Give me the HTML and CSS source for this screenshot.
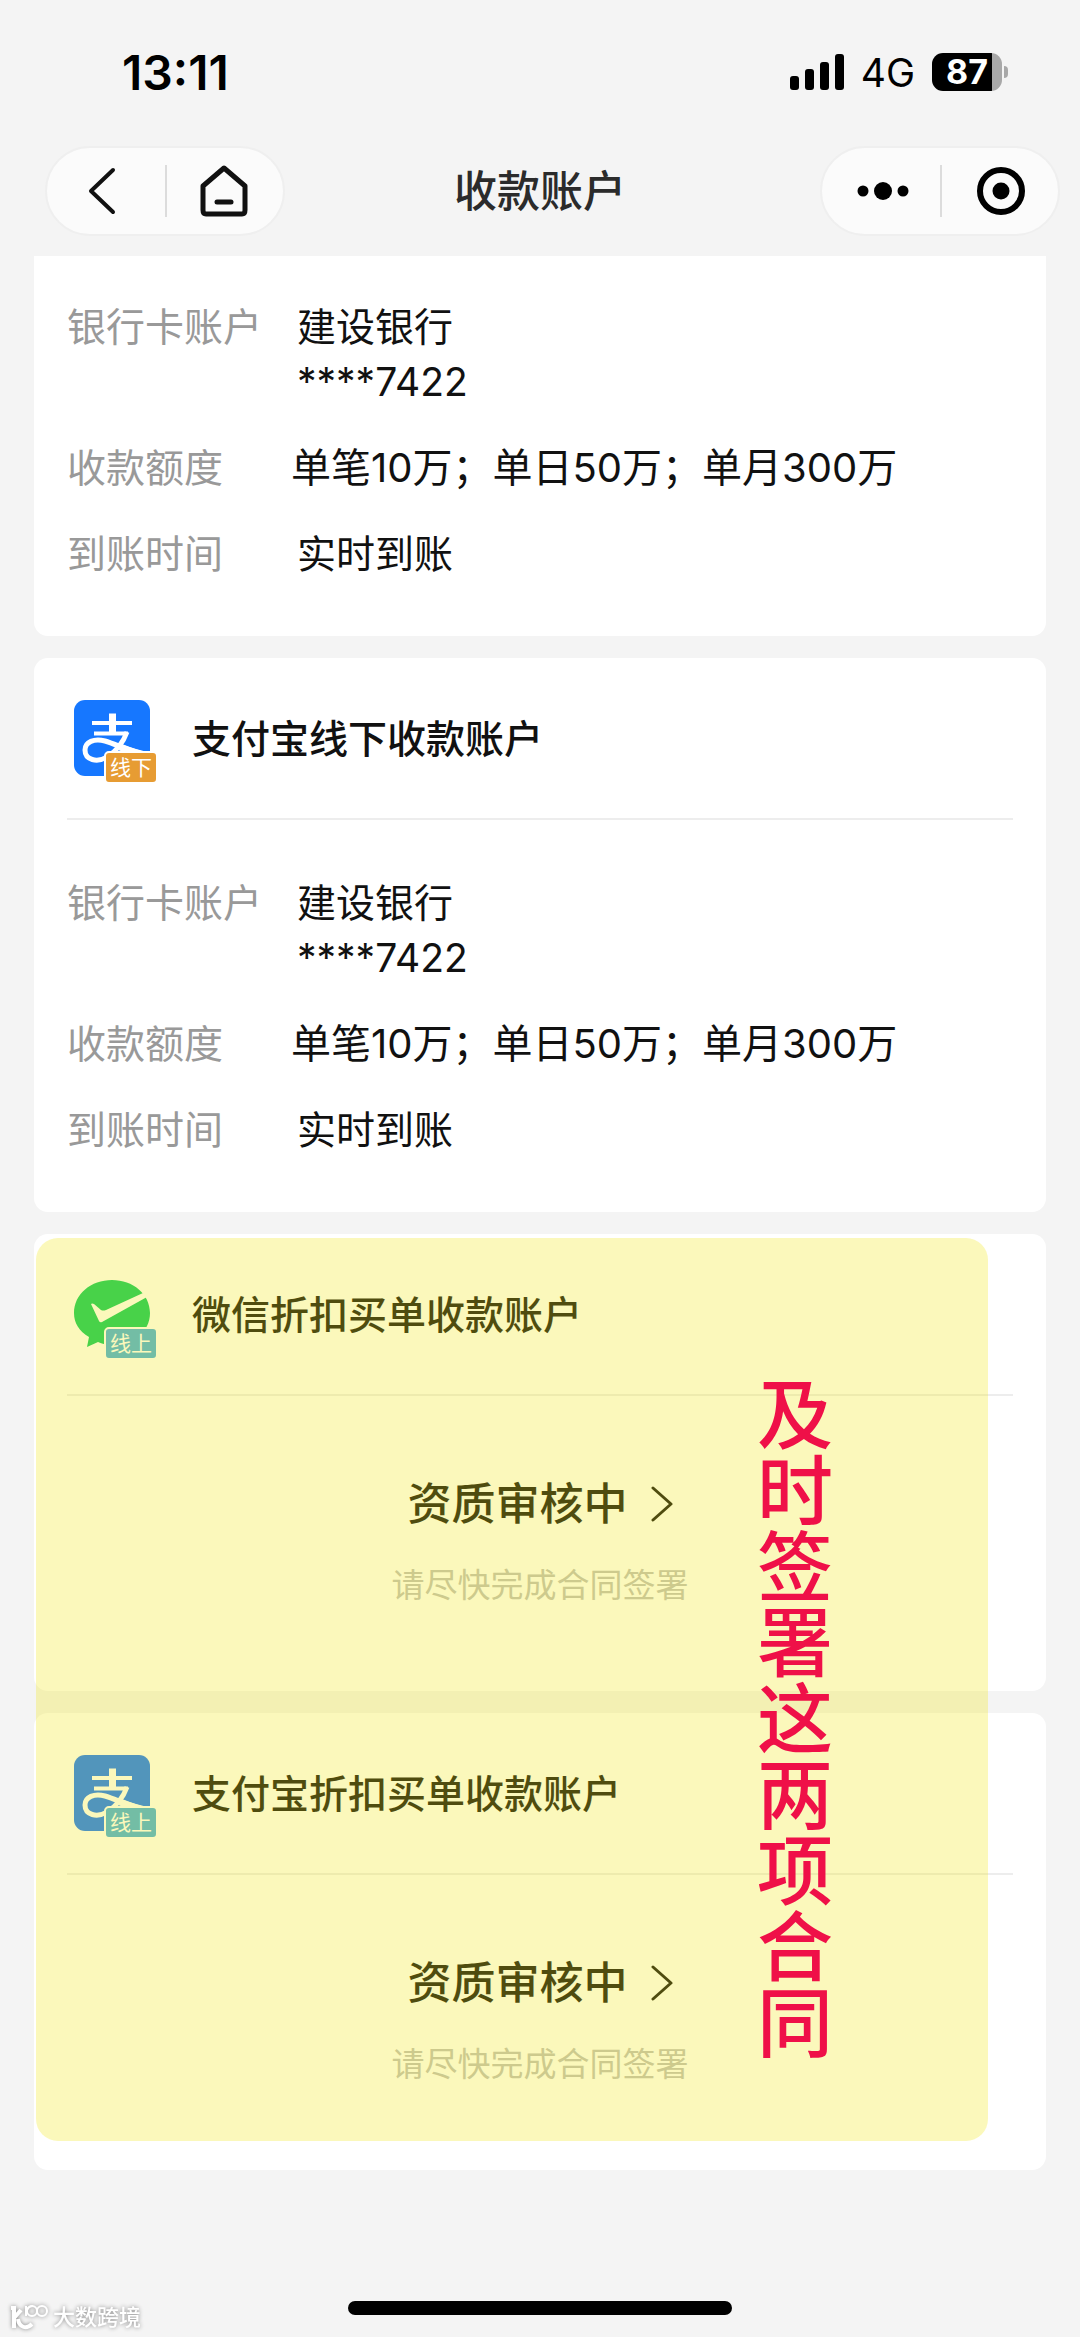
FILE: index.html
```html
<!DOCTYPE html>
<html lang="zh-CN">
<head>
<meta charset="utf-8">
<meta name="viewport" content="width=device-width, initial-scale=1">
<title>收款账户</title>
<link rel="stylesheet" href="styles.css">
</head>
<body>
<svg class="defs" aria-hidden="true">
  <symbol id="alipay" viewBox="0 0 76 76">
    <rect width="76" height="76" rx="11" fill="#1677ff"/>
    <g fill="none" stroke="#fff">
      <path d="M18 23H58M20 33.500H54" stroke-width="4"/>
      <path d="M38.500 13.500V34" stroke-width="7"/>
      <path d="M53 32C49 43 41 52 33 57C23 63 11 60 11 50C11 42 20 38 31 41C44 45 58 52 78 56" stroke-width="5"/>
      <path d="M46 47C56 51 64 54 76 56" stroke-width="7"/>
    </g>
  </symbol>
  <symbol id="wechat" viewBox="0 0 76 76">
    <path d="M38 4C59 4 76 18 76 37S59 69 38 69C33 69 28 68 24 66L13 71L15 61C5 55 0 47 0 37C0 18 17 4 38 4Z" fill="#08cb62"/>
    <path d="M17 28Q18 27 20 28L27 34Q29 35 32 34L69 17L73 21L28 46Q26 47 25 45Z" fill="#fff"/>
  </symbol>
  <symbol id="chevron" viewBox="0 0 22 36">
    <path d="M2 2L20 18L2 34" fill="none" stroke="#111" stroke-width="3" stroke-linejoin="round" stroke-linecap="round"/>
  </symbol>
</svg>

<header class="top">
  <div class="status-bar">
    <time class="clock">13:11</time>
    <div class="indicators">
      <svg class="signal" viewBox="0 0 54 36" aria-hidden="true">
        <rect x="0" y="22" width="9" height="14" rx="3"/>
        <rect x="15" y="15" width="9" height="21" rx="3"/>
        <rect x="30" y="8" width="9" height="28" rx="3"/>
        <rect x="45" y="0" width="9" height="36" rx="3"/>
      </svg>
      <span class="network">4G</span>
      <span class="battery"><span class="battery-level">87</span><i class="battery-tip"></i></span>
    </div>
  </div>
  <nav class="nav">
    <div class="capsule capsule-start">
      <button class="capsule-button" type="button" aria-label="返回">
        <svg width="28" height="50" viewBox="0 0 28 50"><path d="M25 4L3 25L25 46" fill="none" stroke="#111" stroke-width="4" stroke-linejoin="round" stroke-linecap="round"/></svg>
      </button>
      <button class="capsule-button" type="button" aria-label="首页">
        <svg width="48" height="52" viewBox="0 0 48 52"><path d="M3 21L24 3L45 21V45Q45 49 42 49H6Q3 49 3 45Z" fill="none" stroke="#111" stroke-width="5" stroke-linejoin="round"/><path d="M17 37H31" stroke="#111" stroke-width="5" stroke-linecap="round"/></svg>
      </button>
    </div>
    <h1 class="page-title">收款账户</h1>
    <div class="capsule capsule-end">
      <button class="capsule-button" type="button" aria-label="更多">
        <svg width="52" height="20" viewBox="0 0 52 20"><circle cx="6" cy="10" r="5.500"/><circle cx="26" cy="10" r="9"/><circle cx="46" cy="10" r="5.500"/></svg>
      </button>
      <button class="capsule-button" type="button" aria-label="关闭">
        <svg width="50" height="50" viewBox="0 0 50 50"><circle cx="25" cy="25" r="21" fill="none" stroke="#000" stroke-width="6"/><circle cx="25" cy="25" r="8.500"/></svg>
      </button>
    </div>
  </nav>
</header>

<main class="content">
  <section class="card card-scrolled">
    <dl class="details">
      <div class="row"><dt>银行卡账户</dt><dd>建设银行<br>****7422</dd></div>
      <div class="row row-limit"><dt>收款额度</dt><dd>单笔10万；单日50万；单月300万</dd></div>
      <div class="row"><dt>到账时间</dt><dd>实时到账</dd></div>
    </dl>
  </section>

  <section class="card">
    <div class="card-head">
      <div class="logo"><svg class="logo-mark" aria-hidden="true"><use href="#alipay"/></svg><span class="tag tag-offline">线下</span></div>
      <h2 class="card-title">支付宝线下收款账户</h2>
    </div>
    <dl class="details">
      <div class="row"><dt>银行卡账户</dt><dd>建设银行<br>****7422</dd></div>
      <div class="row row-limit"><dt>收款额度</dt><dd>单笔10万；单日50万；单月300万</dd></div>
      <div class="row"><dt>到账时间</dt><dd>实时到账</dd></div>
    </dl>
  </section>

  <div class="pending">
    <section class="card">
      <div class="card-head">
        <div class="logo"><svg class="logo-mark" aria-hidden="true"><use href="#wechat"/></svg><span class="tag tag-online">线上</span></div>
        <h2 class="card-title">微信折扣买单收款账户</h2>
      </div>
      <div class="review">
        <button class="review-button" type="button">资质审核中<svg class="review-arrow" aria-hidden="true"><use href="#chevron"/></svg></button>
        <p class="review-hint">请尽快完成合同签署</p>
      </div>
    </section>
    <section class="card">
      <div class="card-head">
        <div class="logo"><svg class="logo-mark" aria-hidden="true"><use href="#alipay"/></svg><span class="tag tag-online">线上</span></div>
        <h2 class="card-title">支付宝折扣买单收款账户</h2>
      </div>
      <div class="review">
        <button class="review-button" type="button">资质审核中<svg class="review-arrow" aria-hidden="true"><use href="#chevron"/></svg></button>
        <p class="review-hint">请尽快完成合同签署</p>
      </div>
    </section>
    <div class="highlight"><p class="callout">及时签署这两项合同</p></div>
  </div>
</main>

<footer class="bottom">
  <div class="watermark">
    <svg width="40" height="28" viewBox="0 0 40 28" fill="none" aria-hidden="true">
      <path d="M2 5H5V25M5 15L12 7M9 16C10 24 17 27 23 21" stroke="#fff" stroke-width="4"/>
      <path d="M17 3V13M18 7Q20 3 24 3" stroke="#fff" stroke-width="2"/>
      <circle cx="23" cy="8" r="5" stroke="#fff" stroke-width="2"/>
      <circle cx="33" cy="8" r="5" stroke="#fff" stroke-width="2"/>
    </svg>
    <span>大数跨境</span>
  </div>
  <div class="home-indicator"></div>
</footer>
</body>
</html>
```
FILE: styles.css
```css
* { box-sizing: border-box; margin: 0; padding: 0; }

body {
  display: flex;
  flex-direction: column;
  min-height: 100vh;
  background: #f4f4f4;
  color: #111;
  font-family: Inter, "Noto Sans CJK SC", sans-serif;
  font-size: 39px;
  line-height: 55px;
}

button { border: 0; background: none; color: inherit; font: inherit; cursor: pointer; }

.defs { position: absolute; width: 0; height: 0; }

.status-bar {
  display: flex;
  align-items: center;
  justify-content: space-between;
  height: 144px;
  padding: 0 72px 0 122px;
}
.clock { color: #000; font-size: 48px; font-weight: 600; }
.indicators { display: flex; align-items: center; gap: 17px; color: #000; }
.signal { width: 54px; height: 36px; }
.network { font-size: 39px; }
.battery { display: flex; align-items: center; gap: 2px; }
.battery-level {
  width: 70px;
  height: 38px;
  border-radius: 11px;
  background: linear-gradient(to right, #000 60px, #a8a8a8 60px);
  color: #fff;
  font-size: 34px;
  font-weight: 700;
  line-height: 38px;
  text-align: center;
}
.battery-tip { width: 4px; height: 12px; border-radius: 0 4px 4px 0; background: #a8a8a8; }

.nav {
  display: grid;
  grid-template-columns: 1fr auto 1fr;
  align-items: center;
  height: 112px;
  padding: 0 20px 18px;
}
.capsule {
  display: flex;
  width: 240px;
  height: 90px;
  border: 2px solid #efefef;
  border-radius: 45px;
  background: #fbfbfb;
}
.capsule-start { margin-left: 25px; }
.capsule-start .capsule-button:first-child { padding-right: 8px; }
.capsule-end { justify-self: end; }
.capsule-end .capsule-button { padding-left: 4px; }
.capsule-button { position: relative; display: flex; width: 50%; align-items: center; justify-content: center; }
.capsule-button + .capsule-button::before {
  content: "";
  position: absolute;
  left: 0;
  top: 17px;
  bottom: 17px;
  width: 2px;
  background: #dcdcdc;
}
.page-title { color: #2b2b2b; font-size: 43px; font-weight: 500; }

.content { display: flex; flex: 1; flex-direction: column; gap: 22px; padding: 0 34px; }
.card { padding: 0 33px; border-radius: 14px; background: #fff; }
.card-scrolled { padding-top: 43px; border-radius: 0 0 14px 14px; }
.card-head {
  display: flex;
  align-items: center;
  gap: 42px;
  height: 162px;
  padding-left: 7px;
  border-bottom: 2px solid #ededed;
}
.card-title { font-size: 39px; font-weight: 500; }
.logo { position: relative; width: 76px; height: 76px; }
.logo-mark { display: block; width: 76px; height: 76px; }
.tag {
  position: absolute;
  right: -8px;
  bottom: -8px;
  padding: 0 4px;
  border: 2px solid #fff;
  border-radius: 5px;
  color: #fff;
  font-size: 21px;
  line-height: 29px;
}
.tag-offline { background: #e79c33; }
.tag-online { background: #43aee1; }

.details { display: flex; flex-direction: column; gap: 31px; padding-bottom: 55px; }
.card-head + .details { padding-top: 55px; }
.row { display: grid; grid-template-columns: 230px 1fr; }
.row dt { color: #999; }
.row-limit { grid-template-columns: 224px 1fr; }
.row-limit dd { font-size: 40px; }

.pending { position: relative; display: flex; flex-direction: column; gap: 22px; }
.review {
  display: flex;
  flex-direction: column;
  align-items: center;
  gap: 26px;
  padding: 80px 0 78px;
}
.review-button { display: flex; align-items: center; gap: 23px; font-size: 44px; font-weight: 500; line-height: 56px; }
.review-arrow { width: 22px; height: 36px; }
.review-hint { color: #bfbfbf; font-size: 33px; }

.highlight {
  position: absolute;
  inset: 4px 58px 29px 2px;
  border-radius: 22px;
  background: rgba(242, 231, 12, 0.28);
}
.callout {
  position: absolute;
  top: 138px;
  right: 159px;
  color: #ef1048;
  font-size: 76px;
  font-weight: 500;
  line-height: 78px;
  writing-mode: vertical-rl;
  white-space: nowrap;
}

.bottom { position: relative; display: flex; justify-content: center; padding-bottom: 22px; }
.home-indicator { width: 384px; height: 14px; border-radius: 7px; background: #000; }
.watermark {
  position: absolute;
  left: 9px;
  bottom: 6px;
  display: flex;
  align-items: center;
  gap: 4px;
  color: #fff;
  font-size: 22px;
  font-weight: 500;
  line-height: 28px;
  filter: drop-shadow(0 0 2px #888);
}
```
